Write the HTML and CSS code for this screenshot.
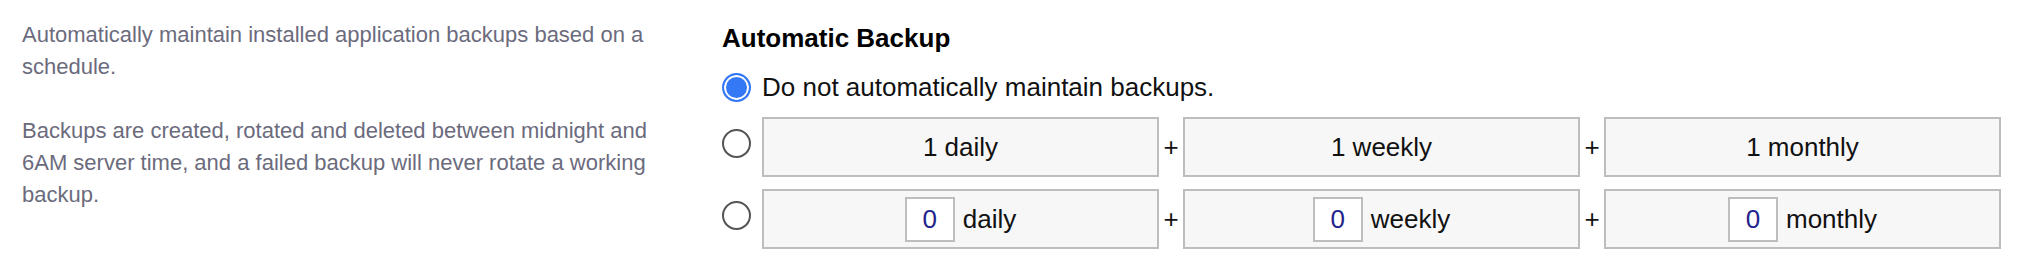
FILE: index.html
```html
<!DOCTYPE html>
<html lang="en">
  <head>
    <meta charset="UTF-8" />
    <meta name="viewport" content="width=device-width, initial-scale=1.0" />
    <title>Automatic Backup</title>
    <link rel="stylesheet" href="styles.css">
  </head>
  <body>
  <div class="settings-row">
    <div class="help">
      <p>Automatically maintain installed application backups based on a schedule.</p>
      <p>Backups are created, rotated and deleted between midnight and 6AM server time, and a failed backup will never rotate a working backup.</p>
    </div>

    <div class="field">
      <h2>Automatic Backup</h2>

      <label class="choice">
        <input type="radio" name="schedule" value="none" checked />
        <span class="choice-text">Do not automatically maintain backups.</span>
      </label>

      <label class="choice">
        <input type="radio" name="schedule" value="default" />
        <span class="counts">
          <span class="count">1 daily</span>
          <span class="plus">+</span>
          <span class="count">1 weekly</span>
          <span class="plus">+</span>
          <span class="count">1 monthly</span>
        </span>
      </label>

      <label class="choice">
        <input type="radio" name="schedule" value="custom" />
        <span class="counts">
          <span class="count"><input type="text" class="num" name="daily" value="0" /> daily</span>
          <span class="plus">+</span>
          <span class="count"><input type="text" class="num" name="weekly" value="0" /> weekly</span>
          <span class="plus">+</span>
          <span class="count"><input type="text" class="num" name="monthly" value="0" /> monthly</span>
        </span>
      </label>
    </div>
  </div>
  </body>
</html>
```

FILE: styles.css
```css
* {
  margin: 0;
  padding: 0;
  box-sizing: border-box;
  font-family: "Liberation Sans", Arial, sans-serif;
}

body {
  background: white;
  color: #111;
}

.settings-row {
  display: grid;
  grid-template-columns: 650px 1fr;
  column-gap: 50px;
  padding: 19px 29px 0 22px;
}

.help p {
  font-size: 22px;
  line-height: 32px;
  color: #6b6b7d;
  margin-bottom: 32px;
}

.field {
  display: flex;
  flex-direction: column;
  gap: 12px;
}

.field h2 {
  font-size: 26px;
  line-height: 38px;
  font-weight: bold;
  color: #000;
}

.choice {
  display: flex;
  align-items: center;
  gap: 11px;
  font-size: 26px;
  min-height: 36px;
  cursor: pointer;
}

.choice input[type="radio"] {
  appearance: none;
  -webkit-appearance: none;
  flex: none;
  width: 29px;
  height: 29px;
  border: 2px solid #555;
  border-radius: 50%;
  background: white;
  margin: 0;
  cursor: pointer;
}

.choice input[type="radio"]:checked {
  border-color: #3478f6;
  background: #3478f6;
  box-shadow: inset 0 0 0 2px white;
}

.counts {
  flex: 1;
  display: flex;
  align-items: center;
}

.choice:has(.counts) input[type="radio"] {
  margin-bottom: 8px;
}

.count {
  flex: 1;
  height: 60px;
  display: flex;
  align-items: center;
  justify-content: center;
  gap: 8px;
  background: #f7f7f7;
  border: 2px solid #bdbdbd;
}

.plus {
  width: 24px;
  text-align: center;
  font-size: 26px;
}

.num {
  width: 50px;
  height: 45px;
  border: 2px solid #bdbdbd;
  background: white;
  color: #23238c;
  font-size: 26px;
  text-align: center;
}

.num:focus {
  outline: none;
  border-color: #888;
}
```
